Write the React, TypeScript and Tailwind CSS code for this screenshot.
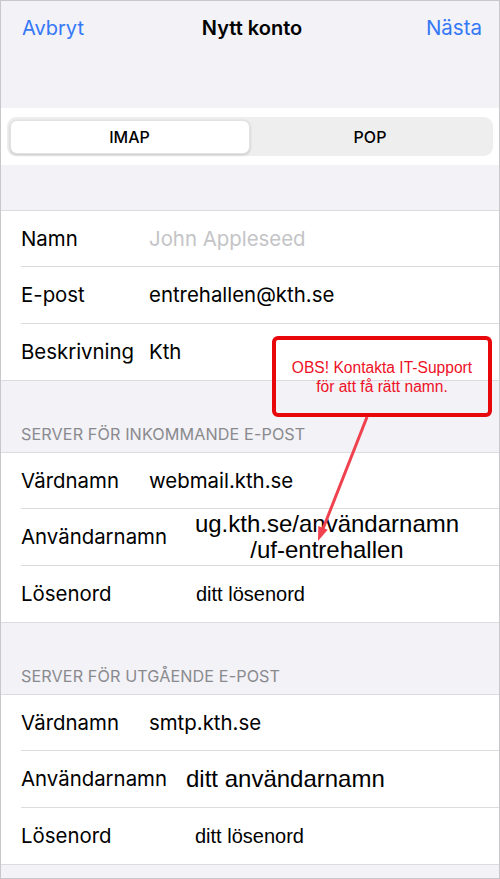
import React from "react";

const inter = { fontFamily: "Inter, 'Noto Sans', sans-serif" } as const;

function Row({
  label,
  children,
  last,
}: {
  label: string;
  children?: React.ReactNode;
  last?: boolean;
}) {
  return (
    <div className="flex h-[56.33px] pl-[20px] bg-white">
      <div
        className={
          "flex flex-1 items-center pt-[1px] " + (last ? "" : "border-b border-[#dcdce0]")
        }
      >
        <div className="w-[128px] shrink-0 text-[20.4px] text-black leading-none">{label}</div>
        <div className="flex-1 flex items-center">{children}</div>
      </div>
    </div>
  );
}

function Header({ text }: { text: string }) {
  return (
    <div className="h-[71px] flex items-end pl-[20px] pb-[10px] text-[16.2px] text-[#8a8a8e] leading-none tracking-[0.1px]">
      {text}
    </div>
  );
}

export default function App() {
  const arial = { fontFamily: "'Liberation Sans', Arial, sans-serif" } as const;
  return (
    <div
      className="relative w-[500px] h-[879px] overflow-hidden border border-[#c8c8cc] bg-[#f2f2f7] box-border"
      style={inter}
    >
      {/* Nav */}
      <div className="grid grid-cols-3 items-center h-[54px] pl-[21px] pr-[17px]">
        <div className="text-[20px] text-[#3478f6]">Avbryt</div>
        <div className="text-center text-[20px] font-semibold text-black">Nytt konto</div>
        <div className="text-right text-[20.5px] text-[#3478f6]">Nästa</div>
      </div>
      <div className="h-[53px]" />
      {/* Segmented */}
      <div className="bg-white h-[57px] px-[6px] pt-[9px]">
        <div className="flex h-[39px] rounded-[9px] bg-[#eeeeef] p-[2.5px]">
          <div className="w-[240px] flex items-center justify-center rounded-[7px] bg-white shadow-[0_1px_3px_rgba(0,0,0,0.18)] border border-[#e2e2e2] text-[16px] font-medium text-black">
            IMAP
          </div>
          <div className="flex-1 flex items-center justify-center text-[16px] font-medium text-black">
            POP
          </div>
        </div>
      </div>
      <div className="h-[45px]" />

      {/* Section 1 */}
      <div className="border-t border-b border-[#dcdce0]">
        <Row label="Namn">
          <span className="text-[20.4px] text-[#c4c4c7]">John Appleseed</span>
        </Row>
        <Row label="E-post">
          <span className="text-[20.4px] text-black">entrehallen@kth.se</span>
        </Row>
        <Row label="Beskrivning" last>
          <span className="text-[20.4px] text-black">Kth</span>
        </Row>
      </div>

      <Header text="SERVER FÖR INKOMMANDE E-POST" />
      <div className="border-t border-b border-[#dcdce0]">
        <Row label="Värdnamn">
          <span className="text-[20.4px] text-black">webmail.kth.se</span>
        </Row>
        <Row label="Användarnamn">
          <div
            className="ml-[45px] w-[266px] text-center text-[24px] leading-[26px] text-black"
            style={arial}
          >
            ug.kth.se/användarnamn
            <br />
            /uf-entrehallen
          </div>
        </Row>
        <Row label="Lösenord" last>
          <span className="ml-[47px] text-[20px] text-black" style={arial}>
            ditt lösenord
          </span>
        </Row>
      </div>

      <Header text="SERVER FÖR UTGÅENDE E-POST" />
      <div className="border-t border-b border-[#dcdce0]">
        <Row label="Värdnamn">
          <span className="text-[20.4px] text-black">smtp.kth.se</span>
        </Row>
        <Row label="Användarnamn">
          <span className="ml-[37px] text-[24px] text-black" style={arial}>
            ditt användarnamn
          </span>
        </Row>
        <Row label="Lösenord" last>
          <span className="ml-[46px] text-[20px] text-black" style={arial}>
            ditt lösenord
          </span>
        </Row>
      </div>

      {/* Callout */}
      <div
        className="absolute left-[271px] top-[335px] w-[220px] h-[81px] border-[4px] border-[#e8080c] rounded-[6px] flex flex-col items-center justify-center text-[15.6px] leading-[19px] text-[#ee1126]"
        style={arial}
      >
        <div>OBS! Kontakta IT-Support</div>
        <div>för att få rätt namn.</div>
      </div>

      {/* Arrow */}
      <svg
        className="absolute left-[-1px] top-[-1px] pointer-events-none"
        width="500"
        height="879"
        viewBox="0 0 500 879"
      >
        <line x1="367" y1="417" x2="322.5" y2="530" stroke="#f0414e" strokeWidth="3" />
        <polygon points="318,541 327.7,529.7 318.3,526.1" fill="#f0414e" />
      </svg>
    </div>
  );
}
